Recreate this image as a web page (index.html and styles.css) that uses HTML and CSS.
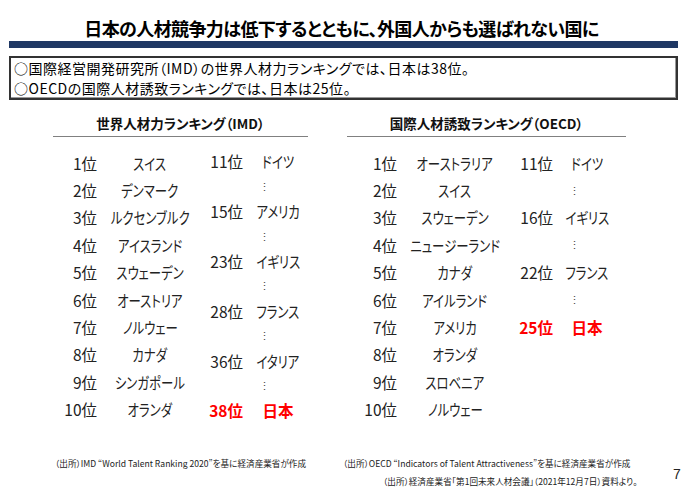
FILE: index.html
```html
<!DOCTYPE html>
<html lang="ja">
<head>
<meta charset="utf-8">
<title>日本の人材競争力</title>
<link rel="stylesheet" href="styles.css">
</head>
<body>
<div class="slide">
  <h1 class="title">日本の人材競争力は低下するとともに、外国人からも選ばれない国に</h1>
  <div class="rule"></div>
  <div class="lead">
    <p>○国際経営開発研究所（IMD）の世界人材力ランキングでは、日本は38位。</p>
    <p>○OECDの国際人材誘致ランキングでは、日本は25位。</p>
  </div>

  <div class="rankings">
    <section class="panel panel-imd">
      <h2 class="panel-head">世界人材力ランキング（IMD）</h2>
      <div class="panel-body">
        <div class="main">
          <span class="num">1位</span><span class="name"><span class="kana">スイス</span></span>
          <span class="num">2位</span><span class="name"><span class="kana">デンマーク</span></span>
          <span class="num">3位</span><span class="name"><span class="kana">ルクセンブルク</span></span>
          <span class="num">4位</span><span class="name"><span class="kana">アイスランド</span></span>
          <span class="num">5位</span><span class="name"><span class="kana">スウェーデン</span></span>
          <span class="num">6位</span><span class="name"><span class="kana">オーストリア</span></span>
          <span class="num">7位</span><span class="name"><span class="kana">ノルウェー</span></span>
          <span class="num">8位</span><span class="name"><span class="kana">カナダ</span></span>
          <span class="num">9位</span><span class="name"><span class="kana">シンガポール</span></span>
          <span class="num">10位</span><span class="name"><span class="kana">オランダ</span></span>
        </div>
        <div class="sub sub-imd">
          <span class="num">11位</span><span class="name"><span class="kana">ドイツ</span></span>
          <span class="num"></span><span class="dots">⋮</span>
          <span class="num">15位</span><span class="name"><span class="kana">アメリカ</span></span>
          <span class="num"></span><span class="dots">⋮</span>
          <span class="num">23位</span><span class="name"><span class="kana">イギリス</span></span>
          <span class="num"></span><span class="dots">⋮</span>
          <span class="num">28位</span><span class="name"><span class="kana">フランス</span></span>
          <span class="num"></span><span class="dots">⋮</span>
          <span class="num">36位</span><span class="name"><span class="kana">イタリア</span></span>
          <span class="num"></span><span class="dots">⋮</span>
          <span class="num hl">38位</span><span class="name hl">日本</span>
        </div>
      </div>
    </section>

    <section class="panel panel-oecd">
      <h2 class="panel-head">国際人材誘致ランキング（OECD）</h2>
      <div class="panel-body">
        <div class="main">
          <span class="num">1位</span><span class="name"><span class="kana">オーストラリア</span></span>
          <span class="num">2位</span><span class="name"><span class="kana">スイス</span></span>
          <span class="num">3位</span><span class="name"><span class="kana">スウェーデン</span></span>
          <span class="num">4位</span><span class="name"><span class="kana">ニュージーランド</span></span>
          <span class="num">5位</span><span class="name"><span class="kana">カナダ</span></span>
          <span class="num">6位</span><span class="name"><span class="kana">アイルランド</span></span>
          <span class="num">7位</span><span class="name"><span class="kana">アメリカ</span></span>
          <span class="num">8位</span><span class="name"><span class="kana">オランダ</span></span>
          <span class="num">9位</span><span class="name"><span class="kana">スロベニア</span></span>
          <span class="num">10位</span><span class="name"><span class="kana">ノルウェー</span></span>
        </div>
        <div class="sub sub-oecd">
          <span class="num">11位</span><span class="name"><span class="kana">ドイツ</span></span>
          <span class="num"></span><span class="dots">⋮</span>
          <span class="num">16位</span><span class="name"><span class="kana">イギリス</span></span>
          <span class="num"></span><span class="dots">⋮</span>
          <span class="num">22位</span><span class="name"><span class="kana">フランス</span></span>
          <span class="num"></span><span class="dots">⋮</span>
          <span class="num hl">25位</span><span class="name hl">日本</span>
        </div>
      </div>
    </section>
  </div>

  <footer class="notes">
    <p class="note note-imd">（出所）IMD “World Talent Ranking 2020”を基に経済産業省が作成</p>
    <p class="note note-oecd">（出所）OECD “Indicators of Talent Attractiveness”を基に経済産業省が作成</p>
    <p class="note note-meti">（出所）経済産業省「第1回未来人材会議」（2021年12月7日）資料より。</p>
    <span class="page-num">7</span>
  </footer>
</div>
</body>
</html>
```

FILE: styles.css
```css
* {
  box-sizing: border-box;
}

html, body {
  margin: 0;
  padding: 0;
  background: #ffffff;
}

body {
  font-family: "Noto Sans CJK JP", "Noto Sans", sans-serif;
  font-feature-settings: "palt" 1;
  color: #1a1a1a;
}

.slide {
  width: 683px;
  height: 487px;
  overflow: hidden;
}

.title {
  margin: 0;
  padding-top: 16px;
  font-size: 18px;
  line-height: 24px;
  letter-spacing: -0.6px;
  font-weight: 700;
  text-align: center;
  color: #000;
}

.rule {
  height: 7px;
  margin: 1px 5px 0 9px;
  background: #1f3864;
}

.lead {
  margin: 8px 5px 0 9px;
  padding: 0 0 0 3px;
  border: 2px solid #333;
  box-shadow: inset -1px -1px 0 #999;
  font-size: 14px;
  line-height: 20px;
  letter-spacing: 0.5px;
  color: #000;
}

.lead p {
  margin: 0;
}

.rankings {
  display: flex;
  gap: 39px;
  margin-left: 53px;
}

.panel-imd {
  width: 255px;
}

.panel-oecd {
  width: 279px;
}

.panel-head {
  margin: 14px 0 0;
  padding-bottom: 4px;
  border-bottom: 1px solid #808080;
  font-size: 13.5px;
  line-height: 18px;
  font-weight: 700;
  text-align: center;
  color: #111;
}

.panel-body {
  display: flex;
  padding-top: 12px;
  font-size: 15.5px;
  color: #222;
}

.main {
  display: grid;
  grid-template-rows: repeat(10, 27.4px);
  align-items: center;
}

.panel-imd .main {
  grid-template-columns: 44px 106px;
}

.panel-oecd .main {
  grid-template-columns: 50px 116px;
}

.sub {
  display: grid;
  grid-template-columns: 40px 40px;
  align-items: center;
}

.sub-imd {
  grid-template-rows: repeat(11, 1fr);
  column-gap: 15px;
}

.sub-oecd {
  grid-template-rows: repeat(10, 27.4px);
  column-gap: 14px;
}

.num {
  text-align: right;
  white-space: nowrap;
}

.name {
  display: flex;
  justify-content: center;
  white-space: nowrap;
}

.kana {
  display: inline-block;
  transform: scaleX(0.8);
  transform-origin: center;
}

.dots {
  font-size: 11px;
  line-height: 1;
  color: #444;
  padding-left: 1px;
}

.sub-oecd .dots {
  padding-left: 2px;
}

.hl {
  color: #ff0000;
  font-weight: 700;
}

.notes {
  display: grid;
  grid-template-columns: 288px 330px 1fr;
  grid-template-rows: 18px 18px;
  margin: 31px 0 0 55px;
  font-size: 8.6px;
  line-height: 18px;
  color: #222;
}

.note {
  margin: 0;
  white-space: nowrap;
}

.note-imd {
  grid-column: 1;
  grid-row: 1;
}

.note-oecd {
  grid-column: 2;
  grid-row: 1;
}

.note-meti {
  grid-column: 2;
  grid-row: 2;
  padding-left: 40px;
}

.page-num {
  grid-column: 3;
  grid-row: 1 / 3;
  align-self: center;
  padding-top: 4px;
  font-family: "Liberation Sans", sans-serif;
  font-size: 14px;
  color: #222;
}
```
